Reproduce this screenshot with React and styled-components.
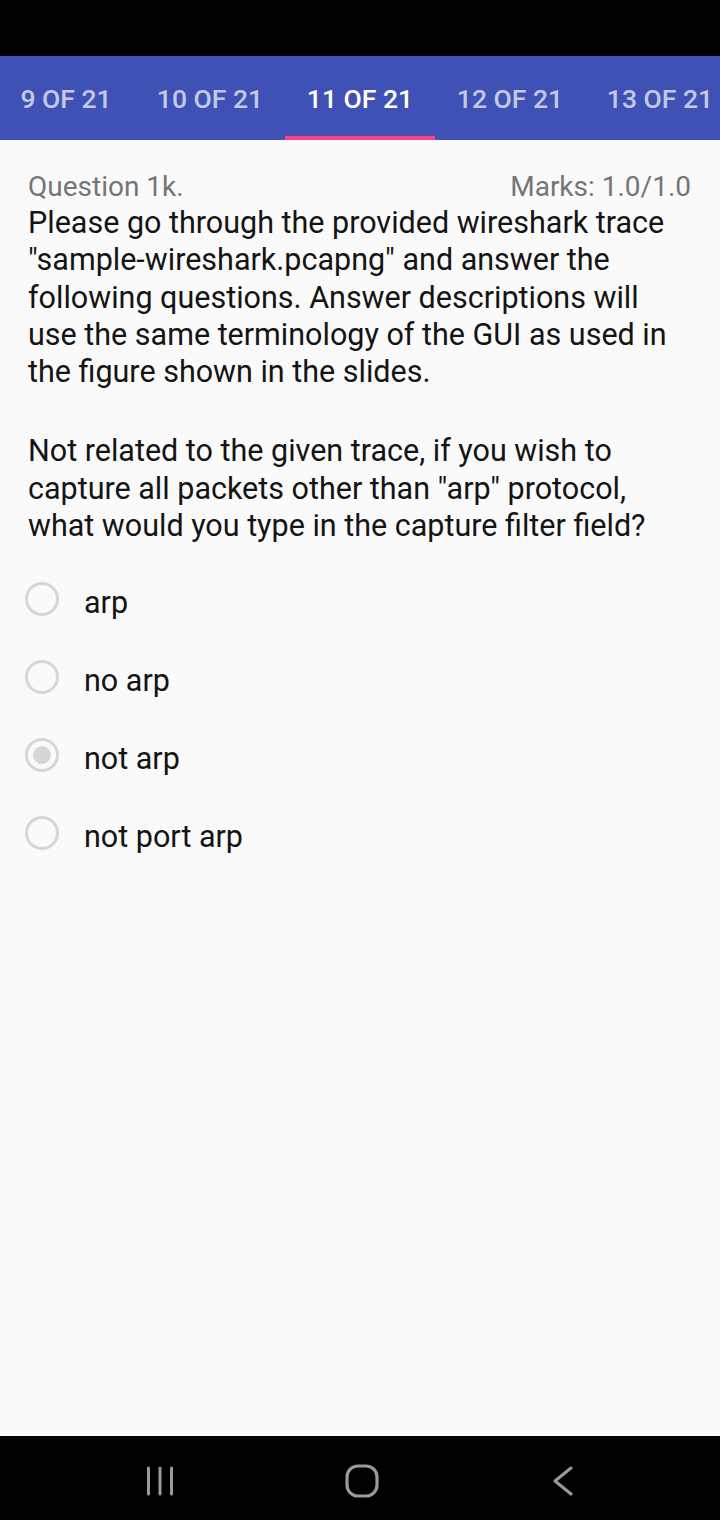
import React from "react";
import styled, { createGlobalStyle } from "styled-components";

const tabs = [
  { label: "9 OF 21", width: 138 },
  { label: "10 OF 21", width: 150 },
  { label: "11 OF 21", width: 150, active: true },
  { label: "12 OF 21", width: 150 },
  { label: "13 OF 21", width: 150 },
];

const options = [
  { label: "arp" },
  { label: "no arp" },
  { label: "not arp", checked: true },
  { label: "not port arp" },
];

const paragraphs = [
  'Please go through the provided wireshark trace "sample-wireshark.pcapng" and answer the following questions. Answer descriptions will use the same terminology of the GUI as used in the figure shown in the slides.',
  'Not related to the given trace, if you wish to capture all packets other than "arp" protocol, what would you type in the capture filter field?',
];

function App() {
  return (
    <Screen>
      <GlobalStyle />
      <StatusBar />
      <TabBar>
        <TabTrack>
          {tabs.map((t) => (
            <Tab key={t.label} $width={t.width} $active={t.active}>
              {t.label}
              {t.active && <Indicator />}
            </Tab>
          ))}
        </TabTrack>
      </TabBar>

      <Content>
        <QuestionHeader>
          <span>Question 1k.</span>
          <span>Marks: 1.0/1.0</span>
        </QuestionHeader>
        {paragraphs.map((p, i) => (
          <QuestionBody key={i}>{p}</QuestionBody>
        ))}

        <OptionList>
          {options.map((o) => (
            <Option key={o.label}>
              <Radio $checked={o.checked} />
              <OptionLabel>{o.label}</OptionLabel>
            </Option>
          ))}
        </OptionList>
      </Content>

      <NavBar>
        <NavButton>
          <svg width="28" height="30" viewBox="0 0 28 30">
            <g stroke="#9a9a9a" strokeWidth="3" strokeLinecap="round">
              <line x1="2.5" y1="2" x2="2.5" y2="28" />
              <line x1="14" y1="2" x2="14" y2="28" />
              <line x1="25.5" y1="2" x2="25.5" y2="28" />
            </g>
          </svg>
        </NavButton>
        <NavButton>
          <svg width="34" height="34" viewBox="0 0 34 34">
            <rect
              x="2"
              y="2"
              width="30"
              height="30"
              rx="11"
              fill="none"
              stroke="#9a9a9a"
              strokeWidth="3.2"
            />
          </svg>
        </NavButton>
        <NavButton>
          <svg width="22" height="30" viewBox="0 0 22 30">
            <polyline
              points="19,2 3,15 19,28"
              fill="none"
              stroke="#9a9a9a"
              strokeWidth="3"
              strokeLinecap="round"
              strokeLinejoin="round"
            />
          </svg>
        </NavButton>
      </NavBar>
    </Screen>
  );
}

export default App;

// --------------- styles ------------------

const GlobalStyle = createGlobalStyle`
  html, body {
    margin: 0;
    padding: 0;
    background: #000;
  }
  body {
    font-family: Roboto, "Liberation Sans", sans-serif;
  }
`;

const Screen = styled.div`
  width: 720px;
  height: 1520px;
  display: flex;
  flex-direction: column;
  background: #fafafa;
  overflow: hidden;
`;

const StatusBar = styled.div`
  height: 56px;
  flex: none;
  background: #000;
`;

const TabBar = styled.div`
  height: 84px;
  flex: none;
  background: #3f51b5;
  overflow: hidden;
`;

const TabTrack = styled.div`
  display: flex;
  height: 100%;
  margin-left: -3px;
`;

const Tab = styled.div`
  position: relative;
  flex: none;
  width: ${(p) => p.$width}px;
  display: flex;
  align-items: center;
  justify-content: center;
  box-sizing: border-box;
  font-size: 26.5px;
  font-weight: 500;
  white-space: nowrap;
  color: ${(p) => (p.$active ? "#ffffff" : "rgba(255, 255, 255, 0.7)")};
`;

const Indicator = styled.div`
  position: absolute;
  left: 0;
  right: 0;
  bottom: 0;
  height: 4px;
  background: #ff4081;
`;

const Content = styled.main`
  flex: 1;
  padding: 30px 29px 0 28px;
`;

const QuestionHeader = styled.div`
  display: flex;
  justify-content: space-between;
  font-size: 28px;
  line-height: 34px;
  color: #757575;
`;

const QuestionBody = styled.p`
  margin: 0;
  font-size: 30.5px;
  line-height: 37.3px;
  color: #141414;

  & + & {
    margin-top: 42px;
  }
`;

const OptionList = styled.div`
  display: flex;
  flex-direction: column;
  margin: 19px 0 0 -3px;
`;

const Option = styled.div`
  height: 78px;
  display: flex;
  align-items: center;
  gap: 25px;
`;

const Radio = styled.span`
  position: relative;
  flex: none;
  width: 34px;
  height: 34px;
  box-sizing: border-box;
  border-radius: 50%;
  border: 3px solid #d6d6d6;
  margin-top: -7px;

  &::after {
    content: "";
    display: ${(p) => (p.$checked ? "block" : "none")};
    position: absolute;
    left: 5px;
    top: 5px;
    width: 18px;
    height: 18px;
    border-radius: 50%;
    background: #d6d6d6;
  }
`;

const OptionLabel = styled.span`
  font-size: 30.5px;
  color: #141414;
`;

const NavBar = styled.nav`
  height: 84px;
  flex: none;
  box-sizing: border-box;
  background: #000;
  display: flex;
  align-items: center;
  justify-content: space-between;
  padding: 6px 117px 0 120px;
`;

const NavButton = styled.div`
  width: 80px;
  display: flex;
  justify-content: center;
  align-items: center;
`;
